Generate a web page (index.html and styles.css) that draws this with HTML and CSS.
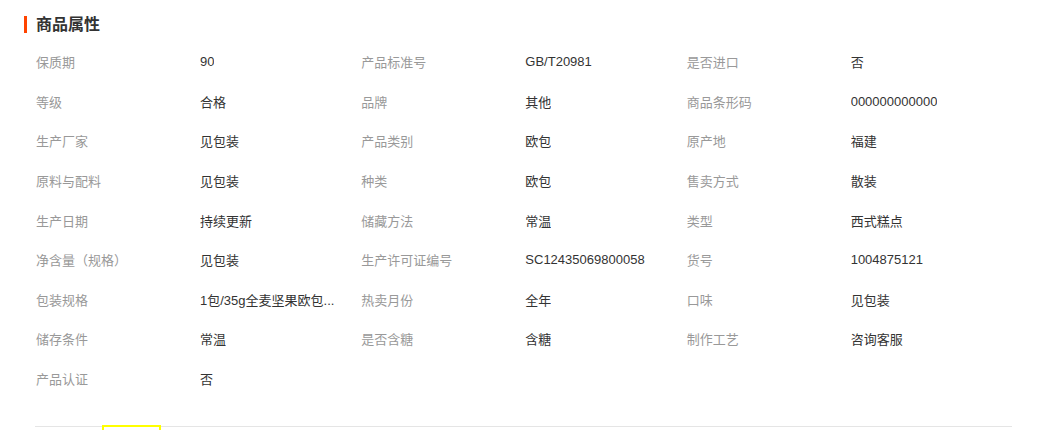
FILE: index.html
```html
<!DOCTYPE html>
<html lang="zh-CN">
  <head>
    <meta charset="UTF-8" />
    <title>商品属性</title>
    <link rel="stylesheet" href="styles.css">
  </head>
  <body>
    <div class="panel">
      <h3 class="title">商品属性</h3>
      <ul class="attrs">
        <li><span class="label">保质期</span><span class="value">90</span></li>
        <li><span class="label">产品标准号</span><span class="value">GB/T20981</span></li>
        <li><span class="label">是否进口</span><span class="value">否</span></li>
        <li><span class="label">等级</span><span class="value">合格</span></li>
        <li><span class="label">品牌</span><span class="value">其他</span></li>
        <li><span class="label">商品条形码</span><span class="value">000000000000</span></li>
        <li><span class="label">生产厂家</span><span class="value">见包装</span></li>
        <li><span class="label">产品类别</span><span class="value">欧包</span></li>
        <li><span class="label">原产地</span><span class="value">福建</span></li>
        <li><span class="label">原料与配料</span><span class="value">见包装</span></li>
        <li><span class="label">种类</span><span class="value">欧包</span></li>
        <li><span class="label">售卖方式</span><span class="value">散装</span></li>
        <li><span class="label">生产日期</span><span class="value">持续更新</span></li>
        <li><span class="label">储藏方法</span><span class="value">常温</span></li>
        <li><span class="label">类型</span><span class="value">西式糕点</span></li>
        <li><span class="label">净含量（规格）</span><span class="value">见包装</span></li>
        <li><span class="label">生产许可证编号</span><span class="value">SC12435069800058</span></li>
        <li><span class="label">货号</span><span class="value">1004875121</span></li>
        <li><span class="label">包装规格</span><span class="value">1包/35g全麦坚果欧包...</span></li>
        <li><span class="label">热卖月份</span><span class="value">全年</span></li>
        <li><span class="label">口味</span><span class="value">见包装</span></li>
        <li><span class="label">储存条件</span><span class="value">常温</span></li>
        <li><span class="label">是否含糖</span><span class="value">含糖</span></li>
        <li><span class="label">制作工艺</span><span class="value">咨询客服</span></li>
        <li><span class="label">产品认证</span><span class="value">否</span></li>
      </ul>
      <div class="tabs">
        <span class="tab active"></span>
      </div>
    </div>
  </body>
</html>
```

FILE: styles.css
```css
body {
  margin: 0;
  font-family: "Liberation Sans", "Noto Sans CJK SC", sans-serif;
  font-size: 13px;
  color: #333;
  background: #fff;
}
.panel {
  padding: 16px 27px 0 24px;
}
.title {
  margin: 0;
  padding-left: 9px;
  border-left: 3px solid #ff4400;
  font-size: 16px;
  line-height: 17px;
  font-weight: bold;
  color: #333;
}
.attrs {
  list-style: none;
  margin: 0;
  padding: 9px 0 0 12px;
  display: grid;
  grid-template-columns: repeat(3, 1fr);
  grid-auto-rows: 39.6px;
}
.attrs li {
  display: flex;
  align-items: center;
}
.label {
  width: 164px;
  flex-shrink: 0;
  color: #999;
}
.value {
  color: #333;
  white-space: nowrap;
  overflow: hidden;
}
.tabs {
  margin: 28px 0 0 11px;
  border-top: 1px solid #e5e5e5;
  height: 10px;
}
.tab.active {
  display: block;
  width: 55px;
  height: 10px;
  margin: -2px 0 0 67px;
  border: 2px solid #ffff00;
  border-bottom: none;
}
```
